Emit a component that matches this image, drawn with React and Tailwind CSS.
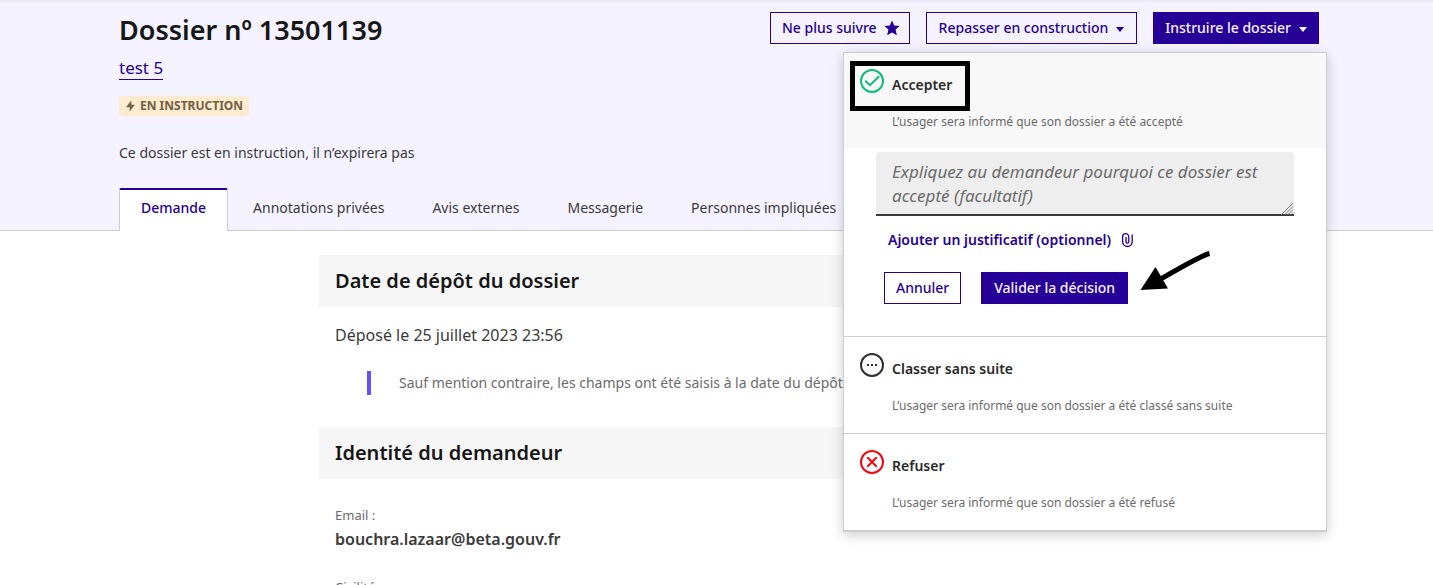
const btn =
  "inline-flex h-8 items-center whitespace-nowrap border border-[#260096] text-[14px] leading-6 font-medium";

function Caret() {
  return (
    <svg className="mt-0.5 ml-2 h-[5px] w-2 shrink-0" viewBox="0 0 8 5" fill="currentColor" aria-hidden="true">
      <path d="M.6 0h6.800q.7 0 .3.6L4.500 4.400q-.5.500-1 0L.3.600Q-.1 0 .6 0z" />
    </svg>
  );
}

function AcceptIcon() {
  return (
    <svg className="size-6 shrink-0 text-[#0fbc7a]" viewBox="0 0 24 24" fill="none" stroke="currentColor" strokeWidth="2" aria-hidden="true">
      <circle cx="12" cy="12" r="11" />
      <path d="M5.2 11.8l4.8 4.4 9.2-9" />
    </svg>
  );
}

function DotsIcon() {
  return (
    <svg className="size-6 shrink-0 text-[#2f2f2f]" viewBox="0 0 24 24" aria-hidden="true">
      <circle cx="12" cy="12" r="11" fill="none" stroke="currentColor" strokeWidth="2" />
      <path fill="currentColor" d="M7 11h2v2H7zM11 11h2v2h-2zM15 11h2v2h-2z" />
    </svg>
  );
}

function RefuseIcon() {
  return (
    <svg className="size-6 shrink-0 text-[#f60614]" viewBox="0 0 24 24" fill="none" stroke="currentColor" strokeWidth="2" aria-hidden="true">
      <circle cx="12" cy="12" r="11" />
      <path d="M7.3 7.3l9.4 9.4M16.7 7.3l-9.4 9.4" />
    </svg>
  );
}

function Choice({ icon, title, children, className = "" }) {
  return (
    <div className={"flex gap-2 px-4 pt-4 " + className}>
      {icon}
      <div className="pt-1">
        <h4 className="text-[14px] leading-6 font-semibold text-[#2a2a2a]">{title}</h4>
        <p className="mt-4 text-[12px] leading-[18px] text-[#6b6b6b]">{children}</p>
      </div>
    </div>
  );
}

function DecisionMenu() {
  return (
    <div className="absolute top-10 -right-2 z-10 w-[484px] border border-b-2 border-[#cecece] bg-white shadow-[0_3px_12px_rgba(0,0,18,0.2)]">
      <Choice icon={<AcceptIcon />} title="Accepter" className="bg-[#f8f8f8] pb-[17px]">
        L’usager sera informé que son dossier a été accepté
      </Choice>
      <form className="px-8 pt-1 pb-8">
        <div className="relative">
          <textarea
            aria-label="Motivation de la décision"
            rows={2}
            className="block w-full resize-none rounded-t bg-[#eee] px-4 py-2 text-[17px] leading-6 shadow-[inset_0_-2px_0_#3a3a3a] placeholder:text-[#6b6b6b] placeholder:italic"
            placeholder="Expliquez au demandeur pourquoi ce dossier est accepté (facultatif)"
          />
          <svg className="pointer-events-none absolute right-0 bottom-0 size-[14px]" viewBox="0 0 14 14" fill="none" stroke="#808080" aria-hidden="true">
            <path d="M1 13L13 1M4.500 13L13 4.500M7.500 13L13 7.500M10.500 13l2.500-2.500" />
          </svg>
        </div>
        <button type="button" className="mt-2 flex h-8 items-center gap-2 px-3 text-[14px] leading-6 font-semibold text-[#260096]">
          Ajouter un justificatif (optionnel)
          <svg className="size-4" viewBox="0 0 16 16" fill="none" stroke="currentColor" strokeWidth="1.3" aria-hidden="true">
            <path d="M7 5v4.700a1.400 1.400 0 0 0 2.800 0V4.800a3.100 3.100 0 0 0-6.200 0v4.900a4.800 4.800 0 0 0 9.600 0V2.600" />
          </svg>
        </button>
        <div className="mt-4 flex gap-5 pl-2">
          <button type="button" className={btn + " px-[11px] text-[#260096]"}>Annuler</button>
          <button type="button" className={btn + " bg-[#260096] px-3 text-[#f5f3ff]"}>Valider la décision</button>
        </div>
      </form>
      <Choice icon={<DotsIcon />} title="Classer sans suite" className="border-t border-[#cecece] pb-[18px]">
        L’usager sera informé que son dossier a été classé sans suite
      </Choice>
      <Choice icon={<RefuseIcon />} title="Refuser" className="border-t border-[#cecece] pb-[18px]">
        L’usager sera informé que son dossier a été refusé
      </Choice>
      <div className="pointer-events-none absolute top-2 left-1.5 h-[50px] w-[120px] border-5 border-black" />
      <svg className="pointer-events-none absolute top-[196px] left-[296px] h-11 w-[72px]" viewBox="0 0 72 44" aria-hidden="true">
        <path d="M69.500 4.500Q62 6 19 31" fill="none" stroke="#000" strokeWidth="5" />
        <path d="M0.500 41L15.500 18l12.500 21.500z" fill="#000" />
      </svg>
    </div>
  );
}

const tabs = ["Annotations privées", "Avis externes", "Messagerie", "Personnes impliquées"];

export default function App() {
  return (
    <div className="h-screen overflow-hidden bg-white font-['Noto_Sans',sans-serif] text-[#3a3a3a]">
      <header className="border-b border-[#cecece] bg-[#f5f3ff] pl-[5px] shadow-[inset_0_3px_3px_-2px_rgba(0,0,18,0.08)]">
        <div className="mx-auto max-w-[1200px]">
          <div className="flex items-start justify-between pt-3">
            <div>
              <h1 className="text-[27px] leading-9 font-semibold text-[#161616]">Dossier nº 13501139</h1>
              <a href="#procedure" className="mt-2 inline-block border-b border-[#260096] text-[17px] leading-[23px] text-[#260096]">
                test 5
              </a>
            </div>
            <div className="flex gap-4">
              <button type="button" className={btn + " px-[11px] text-[#260096]"}>
                Ne plus suivre
                <svg className="-mr-0.5 ml-[7px] size-4" viewBox="0 0 16 16" fill="currentColor" aria-hidden="true">
                  <path d="M8 .5l2.200 4.900 5.500.6-4.100 3.600 1.200 5.600L8 12.400l-4.800 2.800 1.200-5.600L.3 6l5.500-.6z" />
                </svg>
              </button>
              <button type="button" className={btn + " px-3 text-[#260096]"}>
                Repasser en construction
                <Caret />
              </button>
              <div className="relative">
                <button type="button" className={btn + " bg-[#260096] px-[11px] text-[#f5f3ff]"}>
                  Instruire le dossier
                  <Caret />
                </button>
                <DecisionMenu />
              </div>
            </div>
          </div>
          <p className="mt-4 flex h-5 w-fit items-center gap-1 rounded bg-[#feebd0] px-1.5 text-[12px] leading-5 font-bold text-[#716043]">
            <svg className="h-3 w-[11px]" viewBox="0 0 11 12" fill="currentColor" aria-hidden="true">
              <path d="M6.300.5v4.200h3.400L4.700 11.500V7.300H1z" />
            </svg>
            EN INSTRUCTION
          </p>
          <p className="mt-[27px] text-[14px] leading-5">Ce dossier est en instruction, il n’expirera pas</p>
          <nav className="mt-[25px] -mb-px flex items-start text-[14px] leading-6">
            <a href="#demande" aria-current="page" className="h-[43px] rounded-t-xs border-x border-t-2 border-x-[#cecece] border-t-[#260096] bg-white px-[21px] pt-1.5 font-medium text-[#260096]">
              Demande
            </a>
            <div className="flex gap-12 pt-2 pl-[25px]">
              {tabs.map((t) => (
                <a key={t} href="#onglet" className="whitespace-nowrap">{t}</a>
              ))}
            </div>
          </nav>
        </div>
      </header>
      <main className="pt-6 pl-[5px]">
        <div className="mx-auto max-w-[800px]">
          <h2 className="bg-[#f6f6f6] px-4 py-3 text-[20px] leading-7 font-semibold text-[#161616]">Date de dépôt du dossier</h2>
          <p className="mt-4 px-4 text-[16px] leading-6">Déposé le 25 juillet 2023 23:56</p>
          <p className="mt-6 ml-12 border-l-4 border-[#6a4dff] pl-7 text-[14px] leading-6 text-[#6b6b6b]">
            Sauf mention contraire, les champs ont été saisis à la date du dépôt du dossier.
          </p>
          <h2 className="mt-8 bg-[#f6f6f6] px-4 py-3 text-[20px] leading-7 font-semibold text-[#161616]">Identité du demandeur</h2>
          <dl className="mt-6 px-4">
            <dt className="text-[13px] leading-6 text-[#6b6b6b]">Email :</dt>
            <dd className="text-[16px] leading-6 font-semibold">bouchra.lazaar@beta.gouv.fr</dd>
            <dt className="mt-6 text-[13px] leading-6 text-[#6b6b6b]">Civilité</dt>
            <dd className="text-[16px] leading-6 font-semibold">M.</dd>
          </dl>
        </div>
      </main>
    </div>
  );
}
